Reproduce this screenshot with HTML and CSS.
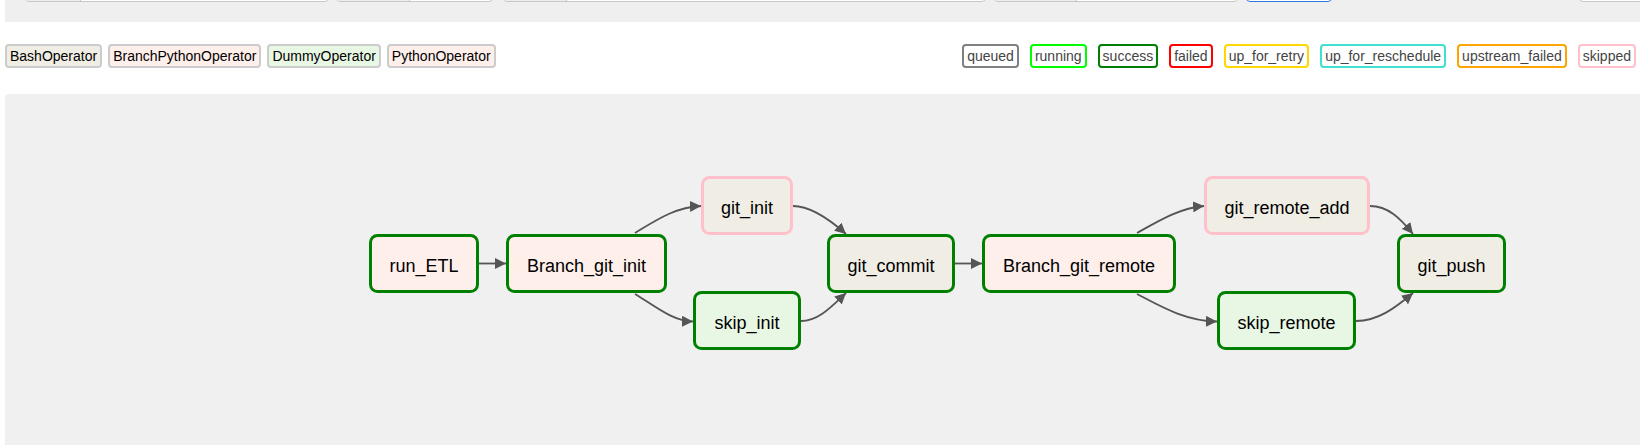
FILE: index.html
```html
<!DOCTYPE html>
<html lang="en">
<head>
<meta charset="utf-8">
<title>Graph View</title>
<link rel="stylesheet" href="styles.css">
</head>
<body>
<div class="page">
  <div class="toolbar">
    <div class="input-group ig-a"><span class="addon addon-a"></span><span class="field"></span></div>
    <div class="input-group ig-b"><span class="addon addon-b"></span><span class="field"></span></div>
    <div class="input-group ig-c"><span class="addon addon-c"></span><span class="field"></span></div>
    <div class="input-group ig-d"><span class="addon addon-d"></span><span class="field"></span></div>
    <div class="btn-blue"></div>
    <div class="input-group ig-e"><span class="field"></span></div>
  </div>

  <div class="legend">
    <div class="legend-group ops">
      <span class="legend-item op op-bash">BashOperator</span>
      <span class="legend-item op op-branch">BranchPythonOperator</span>
      <span class="legend-item op op-dummy">DummyOperator</span>
      <span class="legend-item op op-python">PythonOperator</span>
    </div>
    <div class="legend-group states">
      <span class="legend-item state st-queued">queued</span>
      <span class="legend-item state st-running">running</span>
      <span class="legend-item state st-success">success</span>
      <span class="legend-item state st-failed">failed</span>
      <span class="legend-item state st-retry">up_for_retry</span>
      <span class="legend-item state st-reschedule">up_for_reschedule</span>
      <span class="legend-item state st-upstream">upstream_failed</span>
      <span class="legend-item state st-skipped">skipped</span>
    </div>
  </div>

  <div class="graph">
    <svg class="dag" width="1635" height="351" xmlns="http://www.w3.org/2000/svg">
      <defs>
        <marker id="arrow" viewBox="0 0 10 10" refX="10" refY="5" markerUnits="userSpaceOnUse" markerWidth="11" markerHeight="11" orient="auto">
          <path d="M0,0 L10,5 L0,10 z" class="arrowhead"/>
        </marker>
      </defs>
      <g transform="translate(-5 -94)">
        <g class="edges">
          <path class="edge" d="M479,263.5 L506,263.5"/>
          <path class="edge" d="M635,233 C655,221 675,207 701,206"/>
          <path class="edge" d="M635,294 C655,306 672,321 693,321.5"/>
          <path class="edge" d="M793,206 C810,206 828,218 846,234"/>
          <path class="edge" d="M801,321 C818,321 830,308 846,293"/>
          <path class="edge" d="M955,263.5 L982,263.5"/>
          <path class="edge" d="M1137,233 C1160,220 1180,208 1204,206"/>
          <path class="edge" d="M1137,294 C1160,306 1185,321 1217,321.5"/>
          <path class="edge" d="M1370,206 C1388,206 1400,218 1413,234"/>
          <path class="edge" d="M1356,321 C1378,321 1395,308 1413,293"/>
        </g>
        <g class="nodes">
          <rect class="node ok python" x="370.5" y="235.5" width="107" height="56" rx="7"/>
          <text class="label" x="424" y="272">run_ETL</text>

          <rect class="node ok python" x="507.5" y="235.5" width="158" height="56" rx="7"/>
          <text class="label" x="586.5" y="272">Branch_git_init</text>

          <rect class="node skip bash" x="702.5" y="177.5" width="89" height="56" rx="7"/>
          <text class="label" x="747" y="214">git_init</text>

          <rect class="node ok dummy" x="694.5" y="292.5" width="105" height="56" rx="7"/>
          <text class="label" x="747" y="329">skip_init</text>

          <rect class="node ok bash" x="828.5" y="235.5" width="125" height="56" rx="7"/>
          <text class="label" x="891" y="272">git_commit</text>

          <rect class="node ok python" x="983.5" y="235.5" width="191" height="56" rx="7"/>
          <text class="label" x="1079" y="272">Branch_git_remote</text>

          <rect class="node skip bash" x="1205.5" y="177.5" width="163" height="56" rx="7"/>
          <text class="label" x="1287" y="214">git_remote_add</text>

          <rect class="node ok dummy" x="1218.5" y="292.5" width="136" height="56" rx="7"/>
          <text class="label" x="1286.5" y="329">skip_remote</text>

          <rect class="node ok bash" x="1398.5" y="235.5" width="106" height="56" rx="7"/>
          <text class="label" x="1451.5" y="272">git_push</text>
        </g>
      </g>
    </svg>
  </div>
</div>
</body>
</html>
```

FILE: styles.css
```css
html, body {
  margin: 0;
  padding: 0;
  background: #ffffff;
  font-family: "Liberation Sans", Arial, sans-serif;
  overflow: hidden;
}

.page {
  padding-left: 5px;
}

/* top toolbar, mostly scrolled out of view */
.toolbar {
  height: 22px;
  background: #efefef;
  display: flex;
  align-items: flex-start;
  overflow: hidden;
  padding-left: 20px;
}

.input-group {
  flex-shrink: 0;
  display: flex;
  height: 30px;
  margin-top: -28px;
  box-sizing: border-box;
  border: 1px solid #c6c6c6;
  border-radius: 4px;
  background: #ffffff;
  overflow: hidden;
}

.addon {
  background: #eeeeee;
  border-right: 1px solid #c6c6c6;
  flex-shrink: 0;
}

.field {
  flex: 1;
}

.ig-a { width: 304px; }
.addon-a { width: 54px; }

.ig-b { width: 157px; margin-left: 7px; }
.addon-b { width: 72px; }

.ig-c { width: 483px; margin-left: 10px; }
.addon-c { width: 62px; }

.ig-d { width: 244px; margin-left: 8px; }
.addon-d { width: 81px; }

.btn-blue {
  flex-shrink: 0;
  width: 86px;
  height: 30px;
  margin-top: -28px;
  margin-left: 8px;
  box-sizing: border-box;
  border: 1px solid #2a78de;
  border-radius: 4px;
  background: #ffffff;
}

.ig-e { width: 80px; margin-left: 247px; }

/* legends */
.legend {
  display: flex;
  justify-content: space-between;
  align-items: center;
  padding: 22px 4px 26px 0;
}

.legend-group {
  display: flex;
}

.ops { gap: 6px; }
.states { gap: 11px; }

.legend-item {
  display: inline-flex;
  align-items: center;
  height: 24px;
  box-sizing: border-box;
  padding: 0 3px;
  border: 2px solid #cccccc;
  border-radius: 4px;
  font-size: 14px;
  line-height: 1;
  white-space: nowrap;
}

.op { color: #000000; }
.op-bash { background: #f0ede4; }
.op-branch { background: #ffefeb; }
.op-dummy { background: #e8f7e4; }
.op-python { background: #ffefeb; }

.state { background: #ffffff; color: #444444; }
.st-queued { border-color: #808080; }
.st-running { border-color: #00ff00; }
.st-success { border-color: #008000; }
.st-failed { border-color: #ff0000; }
.st-retry { border-color: #ffd700; }
.st-reschedule { border-color: #40e0d0; }
.st-upstream { border-color: #ffa500; }
.st-skipped { border-color: #ffc0cb; }

/* graph */
.graph {
  height: 351px;
  background: #f0f0f0;
  border-top-left-radius: 4px;
  overflow: hidden;
}

.dag {
  display: block;
}

.edge {
  fill: none;
  stroke: #555555;
  stroke-width: 1.8;
  marker-end: url(#arrow);
}

.arrowhead {
  fill: #555555;
  stroke: none;
}

.node {
  stroke-width: 3;
}

.node.ok { stroke: #008000; }
.node.skip { stroke: #ffc0cb; }
.node.python { fill: #ffefeb; }
.node.bash { fill: #f0ede4; }
.node.dummy { fill: #e8f7e4; }

.label {
  font-family: "Liberation Sans", Arial, sans-serif;
  font-size: 18px;
  fill: #000000;
  text-anchor: middle;
}
```
